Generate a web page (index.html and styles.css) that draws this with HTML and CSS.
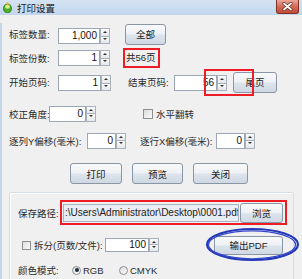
FILE: index.html
```html
<!DOCTYPE html>
<html lang="zh">
<head>
  <meta charset="UTF-8" />
  <title>打印设置</title>
  <link rel="stylesheet" href="styles.css">
</head>
<body>
  <div class="window">
    <div class="titlebar">
      <svg class="app-icon" width="9" height="11" viewBox="0 0 9 11">
        <ellipse cx="4.5" cy="6.5" rx="4" ry="4.2" fill="#4fae2c" stroke="#2f7a16" stroke-width="0.8"/>
        <ellipse cx="4.5" cy="4.8" rx="2.4" ry="2" fill="#d9f08a"/>
        <rect x="3.5" y="0.5" width="2" height="2.5" fill="#e0b020"/>
      </svg>
      <span class="title">打印设置</span>
      <div class="close">
        <svg width="11" height="9" viewBox="0 0 11 9">
          <path d="M2 1.5 L9 7.5 M9 1.5 L2 7.5" stroke="#6a2a20" stroke-width="3.2" stroke-linecap="round"/>
          <path d="M2 1.5 L9 7.5 M9 1.5 L2 7.5" stroke="#ffffff" stroke-width="1.8" stroke-linecap="round"/>
        </svg>
      </div>
    </div>

    <div class="client">
      <div class="row row-1">
        <span class="lbl w-49">标签数量:</span>
        <div class="spin w-52"><span class="field">1,000</span><span class="arrows"><i class="up"></i><i class="down"></i></span></div>
        <button class="btn btn-all">全部</button>
      </div>

      <div class="row row-2">
        <span class="lbl w-49">标签份数:</span>
        <div class="spin w-52"><span class="field">1</span><span class="arrows"><i class="up"></i><i class="down"></i></span></div>
        <span class="total">共56页</span>
      </div>

      <div class="row row-3">
        <span class="lbl w-49">开始页码:</span>
        <div class="spin w-53"><span class="field">1</span><span class="arrows"><i class="up"></i><i class="down"></i></span></div>
        <span class="lbl lbl-end">结束页码:</span>
        <div class="spin w-53"><span class="field">56</span><span class="arrows"><i class="up"></i><i class="down"></i></span></div>
        <button class="btn btn-last">尾页</button>
      </div>

      <div class="row row-4">
        <span class="lbl w-40">校正角度:</span>
        <div class="spin w-47"><span class="field">0</span><span class="arrows"><i class="up"></i><i class="down"></i></span></div>
        <span class="check check-flip"></span>
        <span class="lbl">水平翻转</span>
      </div>

      <div class="row row-5">
        <span class="lbl w-78">逐列Y偏移(毫米):</span>
        <div class="spin w-39"><span class="field">0</span><span class="arrows"><i class="up"></i><i class="down"></i></span></div>
        <span class="lbl lbl-x">逐行X偏移(毫米):</span>
        <div class="spin w-39"><span class="field">0</span><span class="arrows"><i class="up"></i><i class="down"></i></span></div>
      </div>

      <div class="row row-actions">
        <button class="btn btn-print">打印</button>
        <button class="btn btn-preview">预览</button>
        <button class="btn btn-close">关闭</button>
      </div>

      <div class="group">
        <div class="row row-path">
          <span class="lbl w-42">保存路径:</span>
          <div class="path-box">
            <span class="path-field">:\Users\Administrator\Desktop\0001.pdf</span>
            <button class="btn btn-browse">浏览</button>
          </div>
        </div>

        <div class="row row-split">
          <span class="check check-split"></span>
          <span class="lbl w-71">拆分(页数/文件):</span>
          <div class="spin w-54"><span class="field">100</span><span class="arrows"><i class="up"></i><i class="down"></i></span></div>
          <button class="btn btn-pdf">输出PDF</button>
        </div>

        <div class="row row-color">
          <span class="lbl w-54">颜色模式:</span>
          <span class="radio on"></span>
          <span class="lbl w-34">RGB</span>
          <span class="radio"></span>
          <span class="lbl">CMYK</span>
        </div>
      </div>
    </div>

    <div class="mark-end"></div>
    <svg class="mark-pdf" width="95" height="35" viewBox="0 0 95 35">
      <ellipse cx="47.5" cy="17.5" rx="45.5" ry="15.5" fill="none" stroke="#2438b8" stroke-width="2.2"/>
      <ellipse cx="47" cy="17.8" rx="43.6" ry="14" fill="none" stroke="#3247cc" stroke-width="1.3"/>
    </svg>
  </div>
</body>
</html>
```

FILE: styles.css
```css
* {
  box-sizing: border-box;
}

body {
  margin: 0;
  background: #ffffff;
  font-family: "Liberation Sans", "Noto Sans CJK SC", sans-serif;
  font-size: 10px;
  color: #222;
}

.window {
  position: relative;
  width: 302px;
  height: 279px;
  overflow: hidden;
  background: #f0f0f0;
}

.titlebar {
  display: flex;
  align-items: center;
  height: 15px;
  padding-left: 3px;
  background: linear-gradient(#d4e3f3, #c2d6ec);
}

.app-icon {
  margin-right: 5px;
}

.title {
  font-size: 9.5px;
  color: #111;
}

.close {
  display: flex;
  align-items: center;
  justify-content: center;
  width: 23px;
  height: 14px;
  margin-left: auto;
  margin-right: 3px;
  align-self: flex-start;
  border: 1px solid #7d3228;
  border-top: none;
  border-radius: 0 0 3px 3px;
  background: linear-gradient(#e9a99a, #d36c58 50%, #c24b35);
}

.client {
  height: 264px;
  padding-left: 7px;
  border-left: 2px solid #c3d6ea;
}

.row {
  display: flex;
  align-items: center;
}

.lbl {
  flex: none;
  white-space: nowrap;
  font-size: 9.5px;
  color: #2a2a2a;
}

.w-34 { width: 36px; }
.w-40 { width: 40px; }
.w-42 { width: 42px; }
.w-49 { width: 49px; }
.w-54 { width: 54px; }
.w-71 { width: 71px; }
.w-78 { width: 78px; }

/* spinners */
.spin {
  display: flex;
  flex: none;
  height: 16px;
}

.spin.w-39 { width: 39px; }
.spin.w-47 { width: 47px; }
.spin.w-52 { width: 52px; }
.spin.w-53 { width: 53px; }
.spin.w-54 { width: 54px; }

.field {
  flex: 1;
  padding-right: 2px;
  border: 1px solid #9ba7b6;
  background: #fff;
  text-align: right;
  line-height: 14px;
  color: #111;
}

.arrows {
  display: flex;
  flex-direction: column;
  width: 10px;
}

.arrows i {
  position: relative;
  flex: 1;
  border: 1px solid #a9b1bb;
  background: linear-gradient(#fbfbfb, #e4e6e9);
}

.arrows i.down {
  border-top: none;
}

.arrows i::after {
  content: "";
  position: absolute;
  left: 2px;
  top: 2px;
  border-left: 2px solid transparent;
  border-right: 2px solid transparent;
}

.arrows i.up::after {
  border-bottom: 2px solid #333;
}

.arrows i.down::after {
  top: 1px;
  border-top: 2px solid #333;
}

/* buttons */
.btn {
  flex: none;
  padding: 0;
  font-family: inherit;
  font-size: 9.5px;
  color: #1a1a1a;
  border: 1px solid #8996a6;
  border-radius: 3px;
  background: linear-gradient(#f8f9fb 0%, #eef1f5 48%, #dde4ec 52%, #cfd8e3 100%);
}

/* rows of the upper part */
.row-1 {
  height: 22px;
  margin-top: 8px;
}

.row-1 .spin {
  margin-top: 4px;
}

.btn-all {
  width: 41px;
  height: 21px;
  margin-left: 15px;
}

.row-2 {
  height: 20px;
  margin-top: 3px;
}

.total {
  flex: none;
  margin-left: 13px;
  width: 37px;
  height: 20px;
  padding-left: 1px;
  border: 2px solid #ee1c24;
  white-space: nowrap;
  font-size: 9.5px;
  line-height: 16px;
  color: #222;
}

.row-3 {
  height: 22px;
  margin-top: 3px;
}

.row-3 .spin {
  margin-top: 2px;
}

.lbl-end {
  width: 46px;
  margin-left: 17px;
}

.btn-last {
  width: 44px;
  height: 21px;
  margin-left: 6px;
}

.row-4 {
  height: 17px;
  margin-top: 12px;
}

.check {
  flex: none;
  width: 10px;
  height: 10px;
  border: 1px solid #8e8f8f;
  background: linear-gradient(135deg, #dcdcdc, #fbfbfb);
}

.check-flip {
  margin-left: 47px;
  margin-right: 3px;
}

.row-5 {
  height: 17px;
  margin-top: 10px;
}

.lbl-x {
  width: 76px;
  margin-left: 14px;
}

.row-actions {
  height: 21px;
  margin-top: 14px;
  padding-left: 61px;
}

.row-actions .btn {
  height: 21px;
  margin-right: 10px;
}

.btn-print { width: 52px; }
.btn-preview { width: 51px; }
.btn-close { width: 55px; }

/* output group */
.group {
  width: 285px;
  height: 100px;
  margin-top: 8px;
  padding: 7px 0 0 8px;
  border: 1px solid #d5dfe5;
  border-radius: 2px;
  box-shadow: inset 1px 1px 0 #fff;
}

.row-path {
  height: 25px;
}

.path-box {
  display: flex;
  align-items: center;
  width: 227px;
  height: 25px;
  padding: 0 2px 0 1px;
  border: 2px solid #ee1c24;
}

.path-field {
  width: 176px;
  height: 18px;
  padding-left: 1px;
  border: 1px solid #abb5c2;
  background: #e8edf3;
  line-height: 16px;
  white-space: nowrap;
  overflow: hidden;
  color: #222;
}

.btn-browse {
  width: 43px;
  height: 20px;
  margin-left: 1px;
}

.row-split {
  height: 20px;
  margin-top: 10px;
  padding-left: 4px;
}

.check-split {
  width: 9px;
  height: 9px;
  margin-right: 3px;
}

.row-split .spin {
  height: 14px;
  margin-top: -1px;
}

.row-split .field {
  line-height: 12px;
}

.btn-pdf {
  width: 69px;
  height: 19px;
  margin-left: 55px;
}

.row-color {
  height: 12px;
  margin-top: 9px;
}

.radio {
  flex: none;
  position: relative;
  width: 9px;
  height: 9px;
  margin-right: 2px;
  border: 1px solid #8c8f94;
  border-radius: 50%;
  background: linear-gradient(135deg, #dcdde0, #fbfbfb);
}

.radio.on::after {
  content: "";
  position: absolute;
  left: 1.5px;
  top: 1.5px;
  width: 4px;
  height: 4px;
  border-radius: 50%;
  background: #1e2a38;
}

/* annotation marks drawn over the dialog */
.mark-end {
  position: absolute;
  left: 204px;
  top: 69px;
  width: 50px;
  height: 27px;
  border: 2px solid #ee1c24;
}

.mark-pdf {
  position: absolute;
  left: 205px;
  top: 227px;
}
```
